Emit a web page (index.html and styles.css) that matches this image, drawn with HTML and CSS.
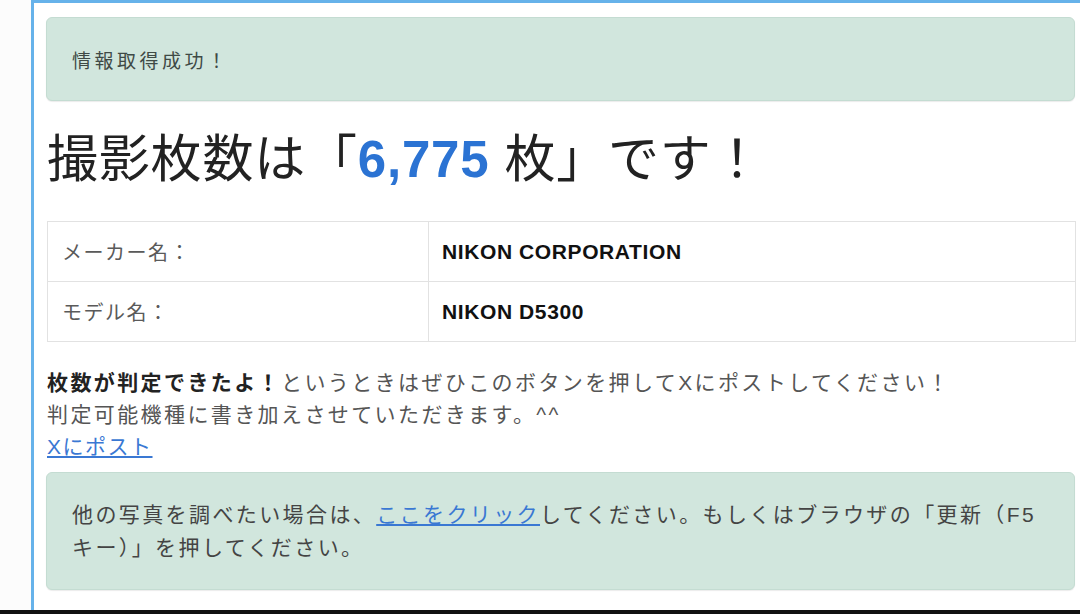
FILE: index.html
```html
<!DOCTYPE html>
<html lang="ja">
<head>
<meta charset="utf-8">
<title>撮影枚数</title>
<link rel="stylesheet" href="styles.css">
</head>
<body>
<div class="page">
  <div class="frame">
    <div class="alert alert-top">情報取得成功！</div>
    <h1 class="result">撮影枚数は「<span class="count">6,775</span> 枚」です！</h1>
    <table class="info">
      <tr><td class="label">メーカー名：</td><td class="value">NIKON CORPORATION</td></tr>
      <tr><td class="label">モデル名：</td><td class="value">NIKON D5300</td></tr>
    </table>
    <p class="note"><strong>枚数が判定できたよ！</strong>というときはぜひこのボタンを押してXにポストしてください！<br>判定可能機種に書き加えさせていただきます。^^</p>
    <a class="post" href="#">Xにポスト</a>
    <div class="alert alert-bottom">他の写真を調べたい場合は、<a href="#">ここをクリック</a>してください。もしくはブラウザの「更新（F5<br>キー）」を押してください。</div>
  </div>
  <div class="bar"></div>
</div>
</body>
</html>
```
FILE: styles.css
```css
html, body {
  margin: 0;
  padding: 0;
  background: #ffffff;
}
body {
  font-family: "Liberation Sans", "Noto Sans CJK JP", sans-serif;
  color: #333;
}
.page {
  width: 1080px;
  height: 614px;
  display: flex;
  flex-direction: column;
  overflow: hidden;
  background: #fcfcfc;
}
.frame {
  flex: 1;
  margin-left: 31px;
  border-top: 3px solid #66b2ea;
  border-left: 3px solid #66b2ea;
  background: #ffffff;
  padding: 14px 5px 0 12px;
  overflow: hidden;
}
.bar {
  height: 4px;
  background: #111;
}
.alert {
  background: #d1e6dd;
  border: 1px solid #c4dcd2;
  border-radius: 6px;
  box-shadow: 0 1px 1px rgba(0,0,0,0.08);
  color: #444;
}
.alert-top {
  height: 82px;
  display: flex;
  align-items: center;
  padding: 0 25px;
  font-size: 19px;
  letter-spacing: 3.5px;
  color: #3f4a46;
}
.result {
  margin: 27px 0 29px 1px;
  font-size: 51px;
  line-height: 64px;
  font-weight: normal;
  letter-spacing: 0.8px;
  color: #222;
  white-space: nowrap;
}
.count {
  color: #2b73d3;
  font-weight: bold;
}
.info {
  width: 1029px;
  margin-left: 1px;
  border-collapse: collapse;
  border: 1px solid #e2e2e2;
}
.info td {
  border: 1px solid #e2e2e2;
  height: 59px;
  padding: 0;
  vertical-align: middle;
}
.label {
  width: 366px;
  padding-left: 14px !important;
  font-size: 20px;
  letter-spacing: 1.5px;
  color: #5a5a5a;
}
.value {
  padding-left: 13px !important;
  font-size: 21px;
  font-weight: bold;
  letter-spacing: 0.6px;
  color: #111;
}
.note {
  margin: 25px 0 0 1px;
  font-size: 21px;
  line-height: 32px;
  letter-spacing: 2.4px;
  color: #555;
  white-space: nowrap;
}
.note strong {
  color: #222;
}
.post {
  display: inline-block;
  margin-left: 1px;
  font-size: 21px;
  line-height: 32px;
  letter-spacing: 1.5px;
  color: #3a78d3;
  text-decoration: underline;
}
.alert-bottom {
  margin-top: 9px;
  padding: 25px 25px;
  font-size: 21px;
  line-height: 33px;
  letter-spacing: 2.4px;
  color: #444;
  white-space: nowrap;
}
.alert-bottom a {
  color: #3a78d3;
  text-decoration: underline;
}
```
